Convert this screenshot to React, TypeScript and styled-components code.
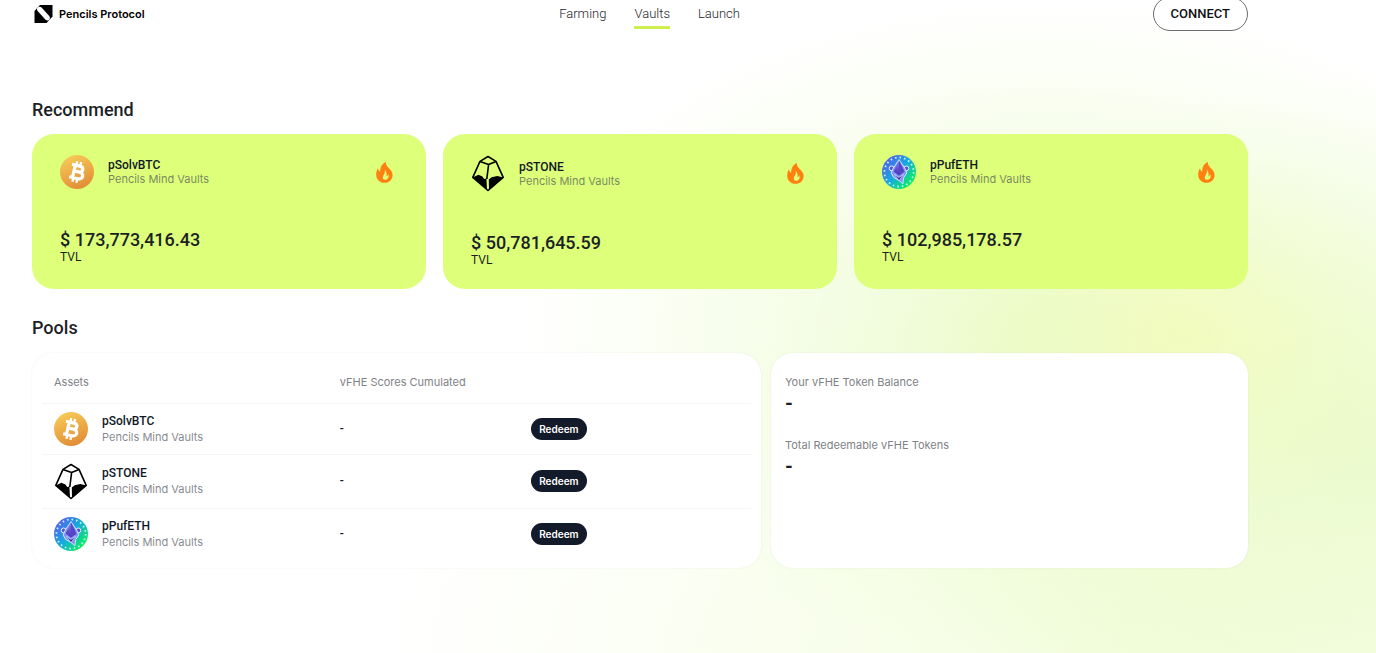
import React from "react";
import styled, { createGlobalStyle } from "styled-components";

const GlobalStyle = createGlobalStyle`
  *, *::before, *::after { box-sizing: border-box; }
  html { min-height: 100%; background: #fff; }
  body {
    margin: 0;
    font-family: Roboto, "Liberation Sans", sans-serif;
    font-size: 12px;
    line-height: 14px;
    color: #1c1f26;
  }
  h1, h2, h3, p { margin: 0; }
`;

const Page = styled.div`
  min-height: 100vh;
  padding: 0 128px 84px 32px;
  overflow: hidden;
  background:
    radial-gradient(ellipse 19% 28% at 86% 51%, rgba(246, 251, 180, 0.65), rgba(246, 251, 180, 0.25) 50%, rgba(246, 251, 180, 0) 100%),
    radial-gradient(ellipse 36% 56% at 99% 68%, rgba(232, 250, 198, 0.8), rgba(232, 250, 198, 0.35) 55%, rgba(232, 250, 198, 0) 100%),
    radial-gradient(ellipse 38% 50% at 76% 50%, rgba(232, 251, 198, 0.9), rgba(232, 251, 198, 0.4) 50%, rgba(232, 251, 198, 0) 100%),
    radial-gradient(ellipse 56% 56% at 84% 100%, rgba(242, 253, 218, 0.9), rgba(242, 253, 218, 0.4) 55%, rgba(242, 253, 218, 0) 100%),
    #fff;
`;

const Header = styled.header`
  display: flex;
  justify-content: space-between;
  align-items: center;
  height: 34px;
  margin-top: -3px;
`;

const Brand = styled.a`
  display: flex;
  align-items: center;
  gap: 6px;
  padding: 0 2px;
  color: #000;
  font-family: Inter, "Liberation Sans", sans-serif;
  font-size: 11px;
  font-weight: 600;
  text-decoration: none;
`;

const Nav = styled.nav`
  display: flex;
  gap: 28px;
`;

const NavLink = styled.a<{ $active?: boolean }>`
  padding: 6px 0 4px;
  border-bottom: 3px solid ${(p) => (p.$active ? "#cdf04f" : "transparent")};
  color: #22252b;
  font-size: 13px;
  font-weight: 300;
  line-height: 16px;
  text-decoration: none;
`;

const ConnectButton = styled.button`
  height: 34px;
  padding: 0 17px;
  border: 1px solid #6b6d70;
  border-radius: 17px;
  background: #fff;
  color: #101114;
  font: 500 13px/16px Roboto, "Liberation Sans", sans-serif;
  cursor: pointer;
`;

const SectionTitle = styled.h2`
  font-size: 18px;
  font-weight: 500;
  line-height: 22px;
`;

const Section = styled.section<{ $top: number; $gap: number }>`
  display: flex;
  flex-direction: column;
  gap: ${(p) => p.$gap}px;
  margin-top: ${(p) => p.$top}px;
`;

const CardGrid = styled.div`
  display: grid;
  grid-template-columns: repeat(3, 1fr);
  gap: 17px;
`;

const VaultCard = styled.article`
  min-height: 155px;
  padding: 21px 33px 21px 28px;
  border-radius: 22px;
  background: #ddff7a;
`;

const CardHead = styled.div`
  display: flex;
  justify-content: space-between;
  align-items: center;
`;

const AssetBox = styled.div`
  display: flex;
  align-items: center;
  gap: 14px;
`;

const AssetName = styled.h3<{ $roomy?: boolean }>`
  font-size: 12px;
  font-weight: 500;
  line-height: ${(p) => (p.$roomy ? 16 : 14)}px;
  color: #101828;
`;

const AssetNote = styled.p<{ $roomy?: boolean }>`
  font-family: Inter, "Liberation Sans", sans-serif;
  font-size: 11px;
  font-weight: 400;
  line-height: ${(p) => (p.$roomy ? 16 : 14)}px;
  color: rgba(70, 74, 84, 0.68);
`;

const Amount = styled.p`
  margin-top: 41px;
  font-size: 18px;
  font-weight: 500;
  line-height: 20px;
`;

const PoolGrid = styled.div`
  display: grid;
  grid-template-columns: 729fr 477fr;
  gap: 10px;
`;

const Panel = styled.div`
  border-radius: 22px;
  background: #fff;
  box-shadow: 0 0 2px rgba(120, 130, 110, 0.12);
`;

const TablePanel = styled(Panel)`
  padding: 8px 10px 9px;
`;

const PoolTable = styled.table`
  width: 100%;
  border-collapse: collapse;
  table-layout: fixed;

  tbody tr { border-top: 1px solid #f5f5f5; }
  th, td { padding: 0; text-align: left; }
  th {
    height: 42px;
    color: #808287;
    font: 400 11px/14px Inter, "Liberation Sans", sans-serif;
  }
  td { padding: 8px 0; color: #101828; font-weight: 500; }
  th:first-child, td:first-child { width: 42%; padding-left: 12px; }
  th:nth-child(2) { width: 27%; }
`;

const RedeemButton = styled.button`
  display: block;
  height: 22px;
  padding: 0 8px;
  border: 0;
  border-radius: 11px;
  background: #131a29;
  color: #fff;
  font: 600 10px/14px Inter, "Liberation Sans", sans-serif;
  cursor: pointer;
`;

const BalancePanel = styled(Panel)`
  display: flex;
  flex-direction: column;
  gap: 21px;
  padding: 22px 14px;
`;

const BalanceLabel = styled.h3`
  color: #808287;
  font: 400 11px/14px Inter, "Liberation Sans", sans-serif;
`;

const BalanceValue = styled.p`
  font-size: 20px;
  font-weight: 700;
  line-height: 28px;
`;

const BrandMark = () => (
  <svg width="19" height="18" viewBox="0 0 19 18" aria-hidden="true">
    <path d="M6 0H18.5V11.5L12.5 18H0.5V6Z" fill="#000" />
    <path d="M4 6.6C2.4 4.6 2.8 3 4 2.2C5.4 1.2 6.8 1.6 7.8 2.8L15.2 11C16.4 12.4 16 14 15 15C14 15.9 12.6 15.8 11.6 14.8Z" fill="#fff" />
  </svg>
);

const Flame = () => (
  <svg width="17" height="21" viewBox="0 0 17 21" aria-label="Hot" role="img">
    <path
      d="M9.8 0C9.8 3.2 11.4 4.8 13.4 6.8C15.4 8.8 16.6 10.6 16.6 13.2C16.6 17.6 13 20.8 8.6 20.8C3.8 20.8 0.2 17.4 0.2 13C0.2 10.2 0.8 8.2 2 6.2C2.4 8 3 9 4.2 9.8C4 5.6 5.8 2 9.8 0ZM8.6 7.8C9.4 10.4 8.4 12 7.4 13.4C6.2 15.2 6.8 17.6 9 17.8C12 17.9 13.4 15 12.2 12.2C11.8 13.4 11.2 14 10.4 14.4C11 11.8 10.4 9.4 8.6 7.8Z"
      fill="#ff7f11"
      fillRule="evenodd"
    />
  </svg>
);

const BtcIcon = () => (
  <svg width="34" height="34" viewBox="0 0 34 34" aria-hidden="true">
    <defs>
      <linearGradient id="btc" x1="0.3" y1="0" x2="0.7" y2="1">
        <stop offset="0" stopColor="#f6cb58" />
        <stop offset="1" stopColor="#e18a34" />
      </linearGradient>
    </defs>
    <circle cx="17" cy="17" r="17" fill="url(#btc)" />
    <g transform="rotate(13 17 17)" fill="none" stroke="#fff" strokeWidth="3.2" strokeLinejoin="round">
      <path d="M10.4 10.6H18.4C23.4 10.6 23.4 16.6 18.4 16.6H14H19.4C24.8 16.6 24.8 23.4 19.4 23.4H10.4M13.8 10.6V23.4" />
      <path d="M14.8 6.4V10M18.8 6.4V10M14.8 24V27.6M18.8 24V27.6" strokeWidth="2.4" />
    </g>
  </svg>
);

const StoneIcon = () => (
  <svg width="34" height="37" viewBox="0 0 34 37" aria-hidden="true">
    <g fill="none" stroke="#000" strokeWidth="1.6" strokeLinejoin="round">
      <path d="M17 1.5L25 6.4L32.2 22.4L17 35.5L1.8 22.4L9 6.4Z" />
      <path d="M9 6.4L17.6 9.6L25 6.4M17.6 9.6L15.8 24" />
    </g>
    <path d="M1.8 22.4L7.4 19.8L11.4 21.4L13.2 24L15.4 23.6L16 34.6Z" fill="#000" />
    <path d="M17.8 24.6L20.6 22.2L26.4 21L32.2 22.4L18 35Z" fill="#000" />
  </svg>
);

const PufIcon = () => (
  <svg width="34" height="34" viewBox="0 0 34 34" aria-hidden="true">
    <defs>
      <linearGradient id="puf" x1="0.1" y1="0.1" x2="0.9" y2="0.8">
        <stop offset="0" stopColor="#5b5bea" />
        <stop offset="0.5" stopColor="#16a9e0" />
        <stop offset="1" stopColor="#0cf05c" />
      </linearGradient>
      <linearGradient id="gem" x1="0" y1="0" x2="0" y2="1">
        <stop offset="0" stopColor="#7d7cf5" />
        <stop offset="1" stopColor="#4a2fb4" />
      </linearGradient>
    </defs>
    <circle cx="17" cy="17" r="17" fill="url(#puf)" />
    <circle cx="17" cy="17" r="14.6" fill="none" stroke="#c5f4f8" strokeWidth="1.8" strokeDasharray="1.6 2.99" />
    <circle cx="9.6" cy="13.4" r="2.4" fill="#5b54d8" stroke="#e4f3ff" />
    <circle cx="24.4" cy="13.4" r="2.4" fill="#5b54d8" stroke="#e4f3ff" />
    <path d="M17 4.6L22.8 13.2L24.8 18L21.8 22.4L20.8 29L17.8 26L11.6 22.4L9.2 18L11.2 13.2Z" fill="#7f95f4" stroke="#d9ecff" strokeWidth="0.9" />
    <path d="M17 5.6L22.4 16.6L17 20.4L11.6 16.6Z" fill="url(#gem)" />
    <path d="M17 5.6V20.4L22.4 16.6Z" fill="#5546c8" />
    <path d="M12.4 19.4L17 22.4L21.6 19.4L17 25.6Z" fill="#43239b" stroke="#d9ecff" strokeWidth="0.6" />
  </svg>
);

const vaults = [
  { name: "pSolvBTC", tvl: "$ 173,773,416.43", Icon: BtcIcon },
  { name: "pSTONE", tvl: "$ 50,781,645.59", Icon: StoneIcon },
  { name: "pPufETH", tvl: "$ 102,985,178.57", Icon: PufIcon },
];

type AssetProps = { name: string; Icon: React.ComponentType; roomy?: boolean };

const Asset = ({ name, Icon, roomy }: AssetProps) => (
  <AssetBox>
    <Icon />
    <div>
      <AssetName $roomy={roomy}>{name}</AssetName>
      <AssetNote $roomy={roomy}>Pencils Mind Vaults</AssetNote>
    </div>
  </AssetBox>
);

export default function App() {
  return (
    <Page>
      <GlobalStyle />
      <Header>
        <Brand href="#">
          <BrandMark />
          Pencils Protocol
        </Brand>
        <Nav>
          <NavLink href="#farming">Farming</NavLink>
          <NavLink href="#vaults" $active>Vaults</NavLink>
          <NavLink href="#launch">Launch</NavLink>
        </Nav>
        <ConnectButton type="button">CONNECT</ConnectButton>
      </Header>
      <main>
        <Section $top={68} $gap={13}>
          <SectionTitle>Recommend</SectionTitle>
          <CardGrid>
            {vaults.map((v) => (
              <VaultCard key={v.name}>
                <CardHead>
                  <Asset name={v.name} Icon={v.Icon} />
                  <Flame />
                </CardHead>
                <Amount>{v.tvl}</Amount>
                <p>TVL</p>
              </VaultCard>
            ))}
          </CardGrid>
        </Section>
        <Section $top={28} $gap={14}>
          <SectionTitle>Pools</SectionTitle>
          <PoolGrid>
            <TablePanel>
              <PoolTable>
                <thead>
                  <tr>
                    <th scope="col">Assets</th>
                    <th scope="col">vFHE Scores Cumulated</th>
                    <th aria-label="Actions" />
                  </tr>
                </thead>
                <tbody>
                  {vaults.map((v) => (
                    <tr key={v.name}>
                      <td><Asset name={v.name} Icon={v.Icon} roomy /></td>
                      <td>-</td>
                      <td><RedeemButton type="button">Redeem</RedeemButton></td>
                    </tr>
                  ))}
                </tbody>
              </PoolTable>
            </TablePanel>
            <BalancePanel>
              <div>
                <BalanceLabel>Your vFHE Token Balance</BalanceLabel>
                <BalanceValue>-</BalanceValue>
              </div>
              <div>
                <BalanceLabel>Total Redeemable vFHE Tokens</BalanceLabel>
                <BalanceValue>-</BalanceValue>
              </div>
            </BalancePanel>
          </PoolGrid>
        </Section>
      </main>
    </Page>
  );
}
